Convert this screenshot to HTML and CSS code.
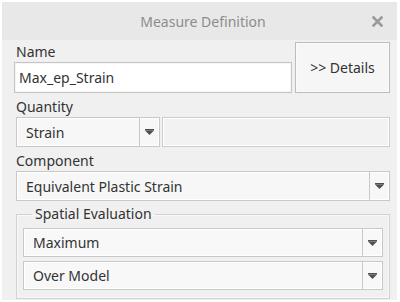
FILE: index.html
```html
<!DOCTYPE html>
<html>
<head>
  <title>Measure Definition</title>
  <link rel="stylesheet" href="styles.css">
</head>
<body>
  <div class="window">
    <div class="titlebar">
      <span class="title">Measure Definition</span>
      <span class="close"><svg width="11" height="11" viewBox="0 0 11 11"><path d="M1.5 1.5 L9.5 9.5 M9.5 1.5 L1.5 9.5" stroke="#9a9a9a" stroke-width="2.6" stroke-linecap="square"/></svg></span>
    </div>

    <div class="content">
      <div class="name-row">
        <div class="name-col">
          <label class="lbl">Name</label>
          <input class="text" type="text" value="Max_ep_Strain" />
        </div>
        <button class="details">&gt;&gt; Details</button>
      </div>

      <label class="lbl">Quantity</label>
      <div class="qty-row">
        <div class="select qty">
          <span class="value">Strain</span>
          <span class="arrow"><svg width="9" height="6" viewBox="0 0 9 6"><rect x="0" y="0" width="9" height="1.5" fill="#505050"/><path d="M0 1.5 H9 L4.5 6 Z" fill="#505050"/></svg></span>
        </div>
        <div class="text disabled"></div>
      </div>

      <label class="lbl">Component</label>
      <div class="select">
        <span class="value">Equivalent Plastic Strain</span>
        <span class="arrow"><svg width="9" height="6" viewBox="0 0 9 6"><rect x="0" y="0" width="9" height="1.5" fill="#505050"/><path d="M0 1.5 H9 L4.5 6 Z" fill="#505050"/></svg></span>
      </div>

      <fieldset class="group">
        <legend>Spatial Evaluation</legend>
        <div class="select small">
          <span class="value">Maximum</span>
          <span class="arrow"><svg width="9" height="6" viewBox="0 0 9 6"><rect x="0" y="0" width="9" height="1.5" fill="#505050"/><path d="M0 1.5 H9 L4.5 6 Z" fill="#505050"/></svg></span>
        </div>
        <div class="select small">
          <span class="value">Over Model</span>
          <span class="arrow"><svg width="9" height="6" viewBox="0 0 9 6"><rect x="0" y="0" width="9" height="1.5" fill="#505050"/><path d="M0 1.5 H9 L4.5 6 Z" fill="#505050"/></svg></span>
        </div>
      </fieldset>
    </div>
  </div>
</body>
</html>
```

FILE: styles.css
```css
body {
  margin: 0;
  background: #ffffff;
  font-family: "Noto Sans", "Open Sans", sans-serif;
  font-size: 14px;
  color: #333333;
}

.window {
  margin: 2px 3px 2px 2px;
  height: 298px;
  background: #f0f0f0;
  box-sizing: border-box;
  overflow: hidden;
}

.titlebar {
  height: 38px;
  background: #e8e8e8;
  display: flex;
  align-items: center;
}

.title {
  flex: 1;
  text-align: center;
  padding-left: 42px;
  color: #8c8c8c;
  font-size: 14px;
}

.close {
  width: 30px;
  margin-right: 5px;
  display: flex;
  justify-content: center;
}

.content {
  padding: 2px 7px 0 14px;
}

.lbl {
  display: block;
  height: 20px;
  line-height: 20px;
}

.name-row {
  display: flex;
  align-items: flex-start;
  gap: 3px;
}

.name-col {
  flex: 1;
  margin-left: -2px;
}

.name-col .lbl {
  padding-left: 2px;
}

.text {
  display: block;
  width: 100%;
  height: 31px;
  box-sizing: border-box;
  border: 1px solid #c4c4c4;
  box-shadow: inset 0 0 0 1px #f6f6f6;
  background: #ffffff;
  padding: 0 4px;
  font-family: inherit;
  font-size: 14px;
  color: #333333;
  outline: none;
}

.details {
  width: 95px;
  height: 51px;
  background: #f6f6f6;
  border: 1px solid #bdbdbd;
  box-shadow: inset 0 0 0 1px #fbfbfb;
  font-family: inherit;
  font-size: 14px;
  color: #333333;
  padding: 0;
}

.content > .lbl {
  margin-top: 4px;
}

.qty-row {
  display: flex;
  gap: 2px;
}

.qty-row .disabled {
  flex: 1;
  height: 30px;
  background: #f2f2f2;
  border-color: #cdcdcd;
  box-shadow: inset 0 0 0 1px #ffffff;
}

.select {
  display: flex;
  height: 30px;
  box-sizing: border-box;
  border: 1px solid #c8c8c8;
  background: #f7f7f7;
  box-shadow: inset 0 0 0 1px #ffffff;
}

.select.qty {
  width: 144px;
}

.select .value {
  flex: 1;
  display: flex;
  align-items: center;
  padding-left: 9px;
}

.select .arrow {
  width: 19px;
  border-left: 1px solid #c8c8c8;
  display: flex;
  align-items: center;
  justify-content: center;
}

.group {
  margin: 3px 0 0 0;
  padding: 4px 6px 8px 6px;
  border: 1px solid #d2d2d2;
  box-shadow: inset 0 0 0 1px #f8f8f8;
  display: flex;
  flex-direction: column;
  gap: 4px;
}

.group legend {
  padding: 0 3px;
  margin-left: 9px;
  font-size: 14px;
  line-height: 20px;
}

.select.small {
  height: 29px;
  background: #f8f8f8;
}
```
